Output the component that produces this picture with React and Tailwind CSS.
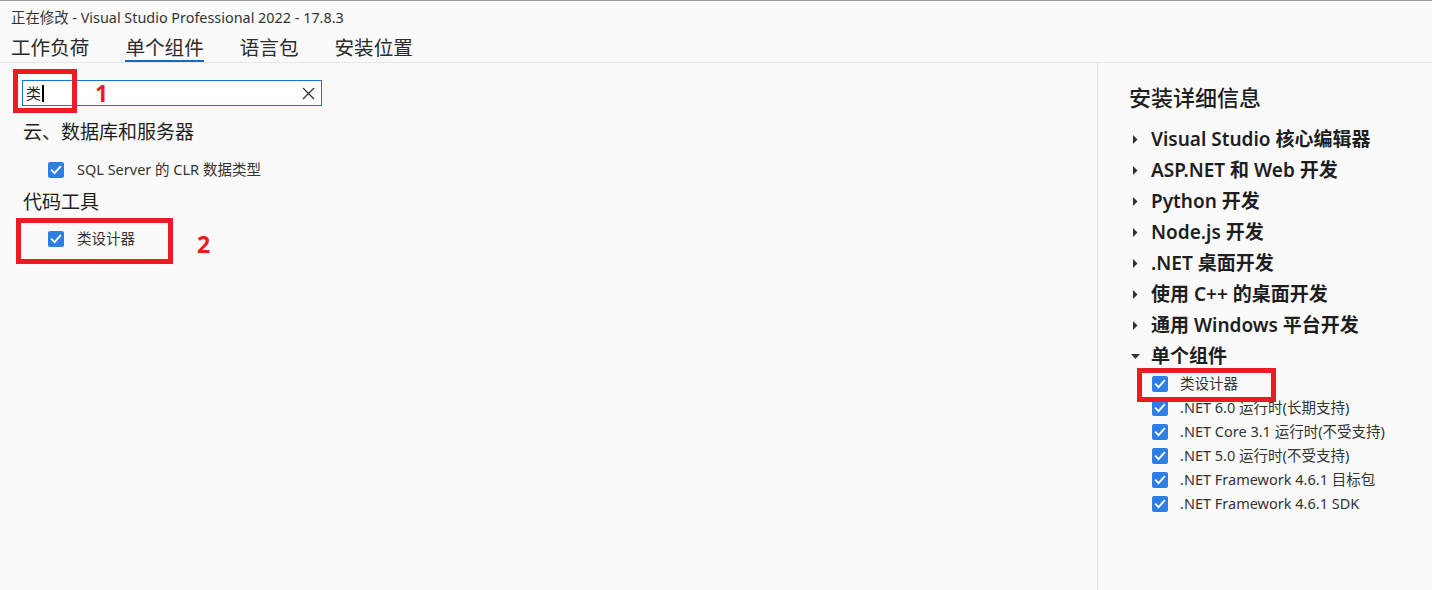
import React from 'react';

const font = "font-['Noto_Sans','Noto_Sans_CJK_SC',sans-serif]";

const Check = () => (
    <span className="w-[16px] h-[16px] rounded-[2px] bg-[#2d7fe6] flex items-center justify-center shrink-0">
        <svg width="12" height="12" viewBox="0 0 12 12" fill="none">
            <path d="M1.8 6.3l2.8 2.8 5.6-6.2" stroke="#fff" strokeWidth="1.9" strokeLinecap="square" />
        </svg>
    </span>
);

const Arrow = ({ open }) => (
    <span className="w-[22px] flex items-center shrink-0">
        {open ? (
            <svg width="10" height="6" viewBox="0 0 10 6" className="ml-[2px]">
                <path d="M0 0h9L4.5 5z" fill="#333" />
            </svg>
        ) : (
            <svg width="5" height="9" viewBox="0 0 5 9" className="ml-[4px]">
                <path d="M0 0l4.5 4.5L0 9z" fill="#333" />
            </svg>
        )}
    </span>
);

const tabs = ['工作负荷', '单个组件', '语言包', '安装位置'];

const workloads = [
    'Visual Studio 核心编辑器',
    'ASP.NET 和 Web 开发',
    'Python 开发',
    'Node.js 开发',
    '.NET 桌面开发',
    '使用 C++ 的桌面开发',
    '通用 Windows 平台开发',
];

const components = [
    '.NET 6.0 运行时(长期支持)',
    '.NET Core 3.1 运行时(不受支持)',
    '.NET 5.0 运行时(不受支持)',
    '.NET Framework 4.6.1 目标包',
    '.NET Framework 4.6.1 SDK',
];

const App = () => {
    return (
        <div className={`w-[1432px] h-[590px] bg-[#fafafa] border-t border-[#989898] flex flex-col text-[#1e1e1e] ${font}`}>
            <div className="h-[34px] flex items-center pl-[11px] text-[14.4px] text-[#333]">
                正在修改 - Visual Studio Professional 2022 - 17.8.3
            </div>
            <div className="h-[28px] flex gap-9 pl-[11px] border-b border-[#e6e6e6] text-[19.6px] text-[#2b2b2b]">
                {tabs.map((t, i) => (
                    <div
                        key={t}
                        className={`flex items-center h-full border-b-2 pt-[1px] ${i === 1 ? 'border-[#0f6cc4]' : 'border-transparent'}`}
                    >
                        {t}
                    </div>
                ))}
            </div>

            <div className="flex flex-1">
                {/* left: component list */}
                <div className="flex-1 pl-[22px]">
                    <div className="relative mt-[17px] w-[300px] h-[26px] border border-[#1a73cf] bg-white flex items-center">
                        <span className="pl-[3px] text-[15px] leading-none text-[#222]">类</span>
                        <span className="w-[2px] h-[17px] bg-black ml-[1px]"></span>
                        <svg width="13" height="13" viewBox="0 0 13 13" className="ml-auto mr-[6px]">
                            <path d="M1 1l11 11M12 1L1 12" stroke="#333" strokeWidth="1.3" />
                        </svg>
                        <div className="absolute left-[-10px] top-[-12px] w-[64px] h-[44px] border-[5px] border-[#ec1c24]"></div>
                        <div className="absolute left-[72px] top-0 bottom-0 flex items-center text-[23px] font-bold text-[#ec1c24]">1</div>
                    </div>

                    <div className="mt-[12px] ml-[1px] h-[28px] flex items-center text-[19px]">云、数据库和服务器</div>
                    <div className="mt-[12px] h-[24px] pl-[26px] flex items-center gap-[13px] text-[14.5px] text-[#333]">
                        <Check />
                        <span>SQL Server 的 CLR 数据类型</span>
                    </div>

                    <div className="mt-[6px] ml-[1px] h-[28px] flex items-center text-[19px]">代码工具</div>
                    <div className="relative mt-[11px] h-[24px] pl-[26px] flex items-center gap-[13px] text-[14.5px] text-[#333]">
                        <Check />
                        <span>类设计器</span>
                        <div className="absolute left-[-6px] top-[-9px] w-[157px] h-[46px] border-[5px] border-[#ec1c24]"></div>
                        <div className="absolute left-[175px] top-[6px] text-[23px] leading-[22px] font-bold text-[#ec1c24]">2</div>
                    </div>
                </div>

                {/* right: install details */}
                <div className="w-[335px] border-l border-[#e2e2e2] pl-[31px] pt-[19px]">
                    <div className="h-[30px] flex items-center text-[22px] font-medium">安装详细信息</div>
                    <div className="mt-[12px] flex flex-col">
                        {workloads.map((w) => (
                            <div key={w} className="h-[31px] flex items-center text-[19px] font-semibold">
                                <Arrow />
                                <span>{w}</span>
                            </div>
                        ))}
                        <div className="h-[31px] flex items-center text-[19px] font-semibold">
                            <Arrow open />
                            <span>单个组件</span>
                        </div>
                        <div className="relative h-[24px] pl-[23px] flex items-center gap-[12px] text-[14.5px] text-[#333]">
                            <Check />
                            <span>类设计器</span>
                            <div className="absolute left-[8px] top-[-4px] w-[139px] h-[34px] border-[5px] border-[#ec1c24]"></div>
                        </div>
                        {components.map((c) => (
                            <div key={c} className="h-[24px] pl-[23px] flex items-center gap-[12px] text-[14.5px] text-[#333]">
                                <Check />
                                <span>{c}</span>
                            </div>
                        ))}
                    </div>
                </div>
            </div>
        </div>
    );
};

export default App;
